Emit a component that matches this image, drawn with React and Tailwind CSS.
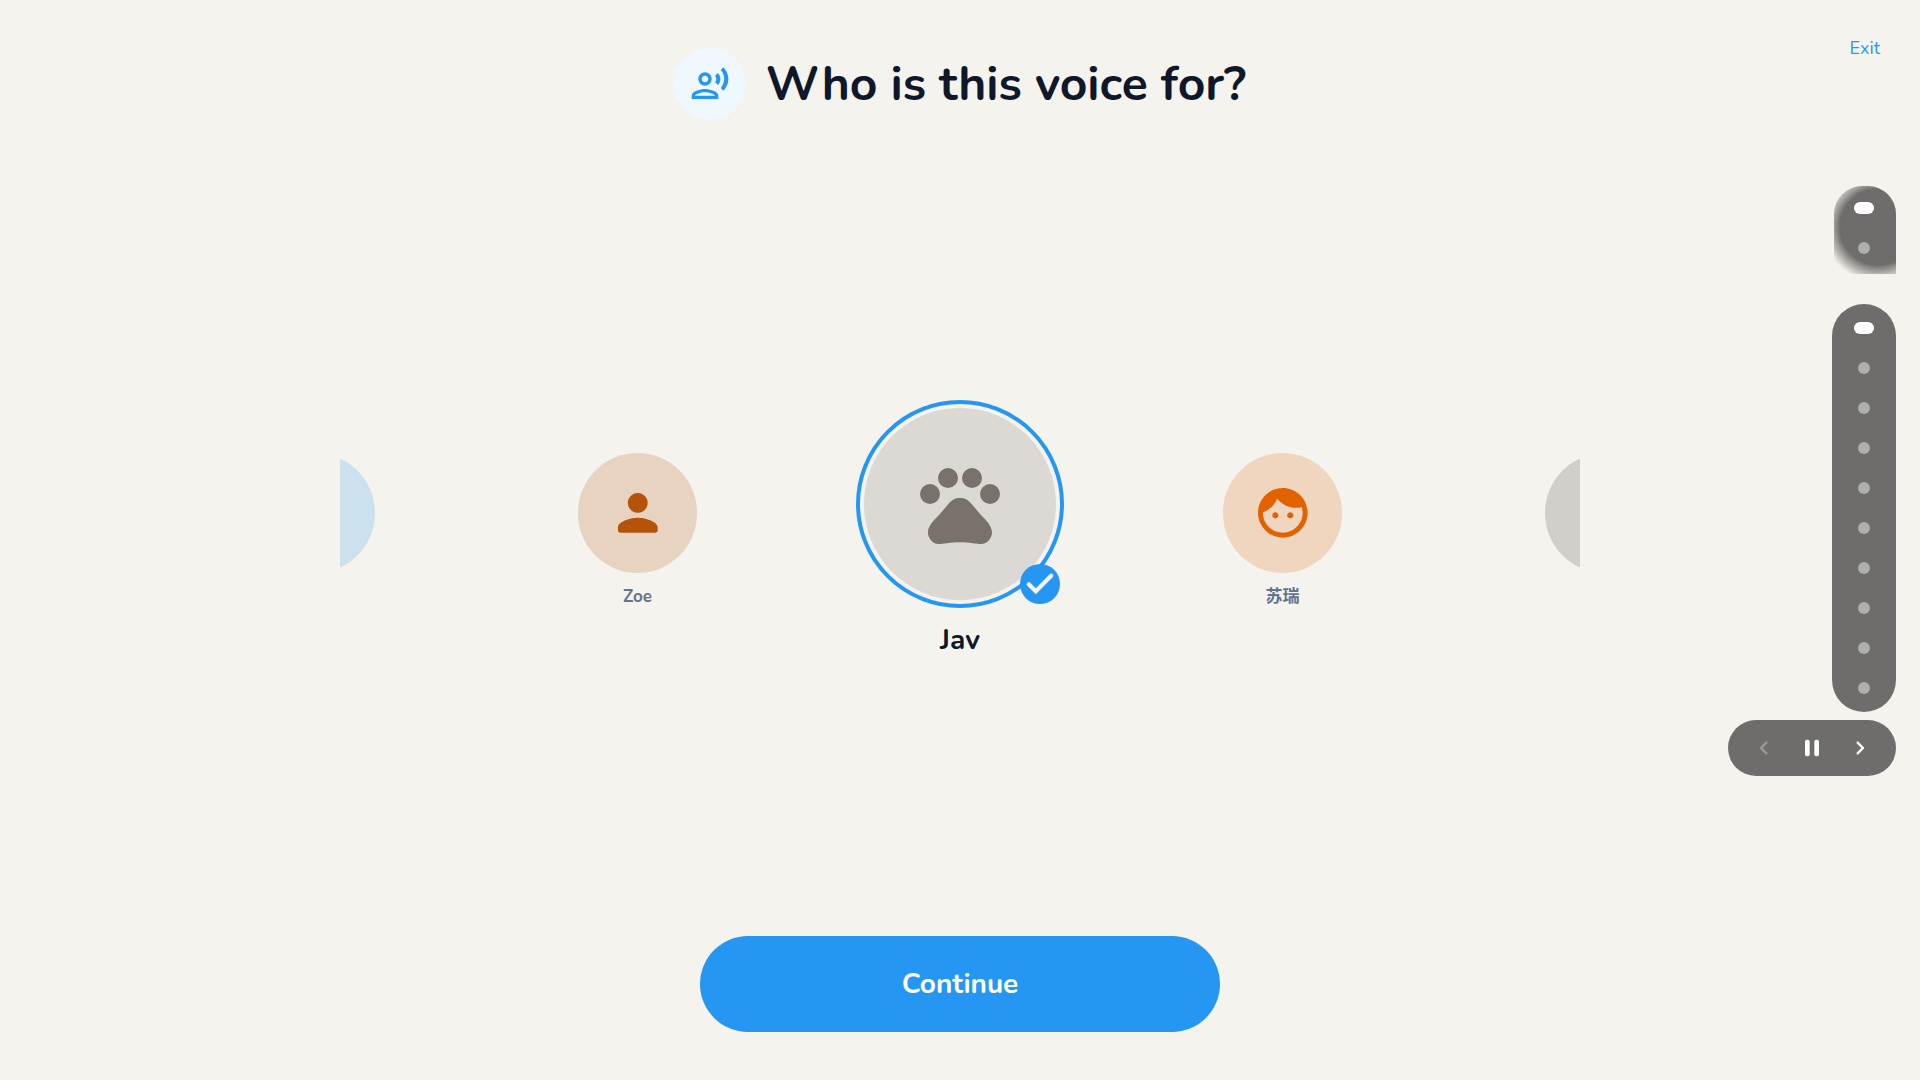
import { useState } from "react";
import { MdOutlineRecordVoiceOver, MdPets } from "react-icons/md";

function PersonIcon({ className }) {
  return (
    <svg className={className} viewBox="0 0 24 24" fill="currentColor">
      <path d="M12 12c2.21 0 4-1.79 4-4s-1.79-4-4-4-4 1.79-4 4 1.79 4 4 4zm0 2c-2.67 0-8 1.34-8 4v1c0 .55.45 1 1 1h14c.55 0 1-.45 1-1v-1c0-2.66-5.33-4-8-4z" />
    </svg>
  );
}

function FaceIcon({ className }) {
  return (
    <svg className={className} viewBox="0 0 24 24" fill="currentColor">
      <path d="M10.25 13c0 .69-.56 1.25-1.25 1.25S7.75 13.69 7.75 13s.56-1.25 1.25-1.25 1.25.56 1.25 1.25zM15 11.75c-.69 0-1.25.56-1.25 1.25s.56 1.25 1.25 1.25 1.25-.56 1.25-1.25-.56-1.25-1.25-1.25zm7 .25c0 5.52-4.48 10-10 10S2 17.52 2 12 6.48 2 12 2s10 4.48 10 10zm-2 0c0-.78-.12-1.53-.33-2.24-.7.15-1.42.24-2.17.24-3.13 0-5.92-1.44-7.76-3.69C8.69 8.87 6.6 10.88 4 11.86c.01.04 0 .09 0 .14 0 4.41 3.59 8 8 8s8-3.59 8-8z" />
    </svg>
  );
}

function ChevronIcon({ className }) {
  return (
    <svg className={className} viewBox="0 0 24 24" fill="currentColor">
      <path d="M9.29 6.71c-.39.39-.39 1.02 0 1.41L13.17 12l-3.88 3.88c-.39.39-.39 1.02 0 1.41.39.39 1.02.39 1.41 0l4.59-4.59c.39-.39.39-1.02 0-1.41L10.7 6.7c-.38-.38-1.02-.38-1.41.01z" />
    </svg>
  );
}

function PauseIcon({ className }) {
  return (
    <svg className={className} viewBox="0 0 24 24" fill="currentColor">
      <rect x="6" y="5" width="4" height="14" rx="1.6" />
      <rect x="14" y="5" width="4" height="14" rx="1.6" />
    </svg>
  );
}

const people = [
  { id: 1, name: "", circle: "bg-[#cbe1ee]" },
  { id: 2, name: "Zoe", circle: "bg-[#e8d3c1] text-[#b45309]", Icon: PersonIcon },
  { id: 3, name: "Jav", circle: "bg-[#dcd9d4] text-[#78716c]", Icon: MdPets },
  { id: 4, name: "苏瑞", circle: "bg-[#f0d6be] text-[#e36200]", Icon: FaceIcon },
  { id: 5, name: "", circle: "bg-[#d2cfca]" },
];

function SelectedPerson({ person }) {
  const { name, circle, Icon } = person;
  return (
    <div className="flex w-[322.5px] shrink-0 flex-col items-center">
      <div className="relative size-52 rounded-full border-4 border-[#2597f2] p-1">
        <div
          className={`flex size-full items-center justify-center rounded-full ${circle}`}
        >
          <Icon className="size-24" />
        </div>
        <span className="absolute right-0 bottom-0 flex size-10 items-center justify-center rounded-full bg-[#2597f2]">
          <svg className="size-10" viewBox="0 0 40 40" fill="none">
            <path
              d="M8.8 20.2L15.8 27.2L31.2 11.8"
              stroke="#f4f3ee"
              strokeWidth="4.2"
              strokeLinecap="round"
            />
          </svg>
        </span>
      </div>
      <span className="mt-3 text-[28px] leading-10 font-bold text-slate-900">
        {name}
      </span>
    </div>
  );
}

function Person({ person, onClick }) {
  const { name, circle, Icon } = person;
  return (
    <button
      className="flex w-[322.5px] shrink-0 flex-col items-center pt-[53.4px]"
      onClick={onClick}
    >
      <span
        className={`flex size-[119.2px] items-center justify-center rounded-full ${circle}`}
      >
        {Icon && <Icon className="size-[59.6px]" />}
      </span>
      <span className="mt-3 h-6 text-[17px] leading-6 font-bold text-slate-500">
        {name}
      </span>
    </button>
  );
}

function Dots({ count }) {
  return Array.from({ length: count }, (_, i) => (
    <span key={i} className="flex h-10 items-center">
      <span
        className={
          i === 0
            ? "h-3 w-5 rounded-full bg-white"
            : "size-3 rounded-full bg-[#afafae]"
        }
      />
    </span>
  ));
}

export default function App() {
  const [selected, setSelected] = useState(3);

  return (
    <div className="relative flex h-screen flex-col items-center overflow-hidden bg-[#f4f3ee] font-['Nunito','Lato','Noto_Sans_CJK_SC',sans-serif]">
      <header className="flex h-[168px] items-center gap-5">
        <span className="flex size-18 items-center justify-center rounded-full bg-[#eff7ff]">
          <MdOutlineRecordVoiceOver className="size-10 text-[#2597f2]" />
        </span>
        <h1 className="text-5xl font-bold whitespace-nowrap text-slate-900">
          Who is this voice for?
        </h1>
      </header>

      <main className="mt-[232px] flex h-[280px] w-[1240px] justify-center overflow-hidden">
        {people.map((p) =>
          p.id === selected ? (
            <SelectedPerson key={p.id} person={p} />
          ) : (
            <Person key={p.id} person={p} onClick={() => setSelected(p.id)} />
          )
        )}
      </main>

      <button className="mt-auto mb-12 h-24 w-[520px] shrink-0 rounded-full bg-[#2597f2] text-[28px] font-bold text-white">
        Continue
      </button>

      <button className="absolute top-9 right-10 text-lg leading-6 text-[#2597f2]">
        Exit
      </button>

      {/* floating page controls */}
      <aside className="absolute top-[186px] right-6 flex flex-col items-end">
        <div className="flex h-[88px] w-[62px] flex-col items-center rounded-t-[28px] rounded-bl-[20px] bg-[radial-gradient(circle_at_44px_41px,#6e6d6b_38px,#6e6d6b00_55px)] pt-0.5 pr-0.5">
          <Dots count={2} />
        </div>
        <div className="mt-[30px] flex w-16 flex-col items-center rounded-full bg-[#6e6d6b] py-1">
          <Dots count={10} />
        </div>
        <div className="mt-2 flex h-14 items-center rounded-full bg-[#6e6d6b] px-3 text-white">
          <button className="flex w-12 justify-center text-[#9a9a98]">
            <ChevronIcon className="size-7 rotate-180" />
          </button>
          <button className="flex w-12 justify-center">
            <PauseIcon className="size-7" />
          </button>
          <button className="flex w-12 justify-center">
            <ChevronIcon className="size-7" />
          </button>
        </div>
      </aside>
    </div>
  );
}
